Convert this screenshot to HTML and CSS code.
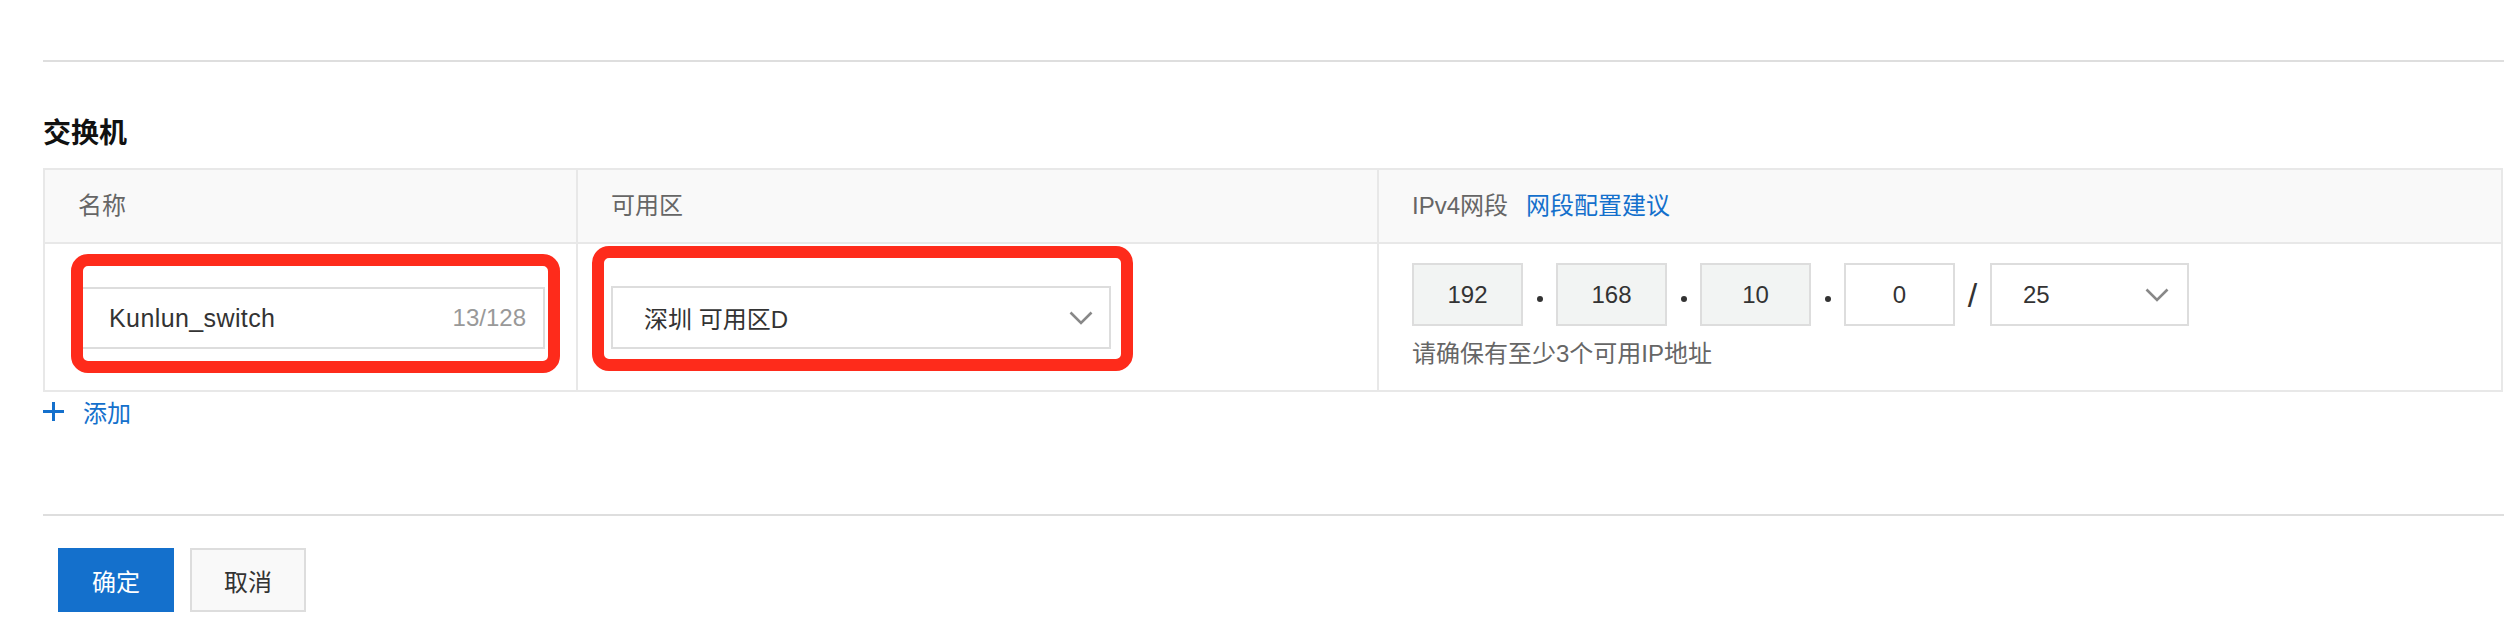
FILE: index.html
```html
<!DOCTYPE html>
<html lang="zh-CN">
<head>
<meta charset="utf-8">
<title>交换机</title>
<link rel="stylesheet" href="styles.css">
</head>
<body>
<div class="page">
  <div class="rule"></div>
  <h2 class="section-title">交换机</h2>

  <div class="table">
    <div class="row head">
      <div class="cell">名称</div>
      <div class="cell">可用区</div>
      <div class="cell last">IPv4网段<a class="link" href="#">网段配置建议</a></div>
    </div>
    <div class="row body">
      <div class="cell name-cell">
        <div class="input">
          <span class="val">Kunlun_switch</span>
          <span class="count">13/128</span>
        </div>
        <div class="mark mark-name"></div>
      </div>
      <div class="cell zone-cell">
        <div class="select zone-select">
          <span class="val">深圳 可用区D</span>
          <svg class="chev" width="24" height="14" viewBox="0 0 24 14"><polyline points="1.5,1.5 12,12 22.5,1.5" fill="none" stroke="#888" stroke-width="2.6"/></svg>
        </div>
        <div class="mark mark-zone"></div>
      </div>
      <div class="cell last cidr-cell">
        <div class="cidr">
          <div class="octet disabled">192</div>
          <span class="sep"><span class="dot"></span></span>
          <div class="octet disabled">168</div>
          <span class="sep"><span class="dot"></span></span>
          <div class="octet disabled">10</div>
          <span class="sep"><span class="dot"></span></span>
          <div class="octet">0</div>
          <span class="slash">/</span>
          <div class="select mask-select">
            <span class="val">25</span>
            <svg class="chev" width="24" height="14" viewBox="0 0 24 14"><polyline points="1.5,1.5 12,12 22.5,1.5" fill="none" stroke="#888" stroke-width="2.6"/></svg>
          </div>
        </div>
        <div class="hint">请确保有至少3个可用IP地址</div>
      </div>
    </div>
  </div>

  <a class="add" href="#">
    <svg class="plus" width="21" height="19" viewBox="0 0 21 19"><rect x="0" y="8" width="21" height="3" fill="#1470cc"/><rect x="9" y="0" width="3" height="19" fill="#1470cc"/></svg>
    <span>添加</span>
  </a>

  <div class="rule footer-rule"></div>
  <div class="actions">
    <button class="btn primary" type="button">确定</button>
    <button class="btn" type="button">取消</button>
  </div>
</div>
</body>
</html>
```

FILE: styles.css
```css
html, body {
  margin: 0;
  padding: 0;
  background: #ffffff;
}

body {
  font-family: "Liberation Sans", "Noto Sans CJK SC", sans-serif;
  font-size: 24px;
  color: #333333;
}

.page {
  padding: 60px 0 0 43px;
}

.rule {
  height: 2px;
  background: #dedede;
}

.section-title {
  margin: 52px 0 14px 0;
  font-size: 28px;
  line-height: 40px;
  font-weight: 700;
  color: #111111;
}

.table {
  width: 2460px;
  box-sizing: border-box;
  border: 2px solid #e8e8e8;
}

.row {
  display: grid;
  grid-template-columns: 533px 801px 1fr;
}

.row.head {
  background: #f9f9f9;
  border-bottom: 2px solid #e8e8e8;
  height: 74px;
  box-sizing: border-box;
}

.row.body {
  height: 146px;
}

.cell {
  box-sizing: border-box;
  border-right: 2px solid #e8e8e8;
  padding: 0 31px 0 33px;
  position: relative;
}

.cell.last {
  border-right: none;
}

.head .cell {
  display: flex;
  align-items: center;
  color: #666666;
  line-height: 28px;
}

.link {
  margin-left: 18px;
  color: #1470cc;
  text-decoration: none;
}

.name-cell {
  padding-top: 43px;
}

.zone-cell {
  padding-top: 42px;
}

.input {
  height: 62px;
  box-sizing: border-box;
  border: 2px solid #dddddd;
  background: #ffffff;
  display: flex;
  align-items: center;
  justify-content: space-between;
  padding: 0 17px 0 29px;
}

.input .val {
  color: #333333;
  font-size: 25px;
  letter-spacing: 0.4px;
}

.input .count {
  color: #999999;
}

.select {
  height: 63px;
  box-sizing: border-box;
  border: 2px solid #dddddd;
  background: #ffffff;
  display: flex;
  align-items: center;
  justify-content: space-between;
  padding: 0 16px 0 31px;
}

.zone-select {
  width: 500px;
}

.mask-select {
  width: 199px;
  padding-right: 18px;
}

.mark {
  position: absolute;
  box-sizing: border-box;
  border: 12px solid #fe2b1b;
  border-radius: 17px;
  pointer-events: none;
}

.mark-name {
  left: 26px;
  top: 10px;
  width: 489px;
  height: 119px;
}

.mark-zone {
  left: 14px;
  top: 2px;
  width: 541px;
  height: 125px;
}

.cidr-cell {
  padding-top: 19px;
}

.cidr {
  display: flex;
  align-items: center;
}

.octet {
  width: 111px;
  height: 63px;
  box-sizing: border-box;
  border: 2px solid #dddddd;
  background: #ffffff;
  display: flex;
  align-items: center;
  justify-content: center;
}

.octet.disabled {
  background: #f2f4f3;
}

.sep {
  width: 33px;
  display: flex;
  justify-content: center;
  padding-top: 9px;
}

.dot {
  width: 6px;
  height: 6px;
  border-radius: 50%;
  background: #333333;
}

.slash {
  width: 35px;
  text-align: center;
  font-size: 34px;
  line-height: 40px;
  color: #333333;
}

.hint {
  margin-top: 14px;
  line-height: 28px;
  color: #666666;
}

.add {
  margin-top: 5px;
  height: 28px;
  display: flex;
  align-items: center;
  color: #1470cc;
  text-decoration: none;
  width: max-content;
}

.plus {
  margin-right: 19px;
}

.footer-rule {
  margin-top: 89px;
}

.actions {
  margin-top: 32px;
  padding-left: 15px;
  display: flex;
  gap: 16px;
}

.btn {
  width: 116px;
  height: 64px;
  box-sizing: border-box;
  border: 2px solid #dddddd;
  background: #f9f9f9;
  color: #333333;
  font-family: "Liberation Sans", "Noto Sans CJK SC", sans-serif;
  font-size: 24px;
  padding: 0;
  cursor: pointer;
}

.btn.primary {
  background: #1470cc;
  border-color: #1470cc;
  color: #ffffff;
}
```
